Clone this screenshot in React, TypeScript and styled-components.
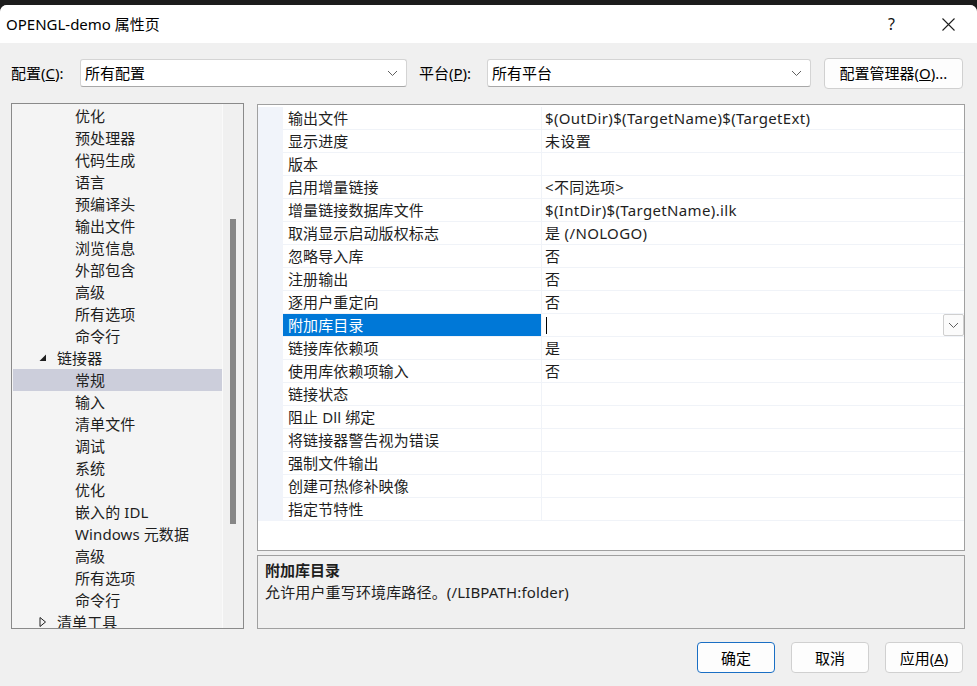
import React from "react";
import styled, { createGlobalStyle } from "styled-components";

const GlobalStyle = createGlobalStyle`
  html, body { margin: 0; padding: 0; background: #1c1c1c; }
  body { font-family: "Noto Sans", "Noto Sans CJK SC", sans-serif; font-size: 15px; color: #000; }
  * { box-sizing: border-box; }
`;

const Window = styled.div`
  margin-top: 5px;
  width: 977px;
  height: 681px;
  background: #f0f0f0;
  border-radius: 7px 7px 0 0;
  overflow: hidden;
  display: flex;
  flex-direction: column;
`;

const TitleBar = styled.div`
  height: 38px;
  background: #ffffff;
  display: flex;
  align-items: center;
  padding-left: 6px;
  flex-shrink: 0;
`;

const Title = styled.div`
  flex: 1;
  font-size: 15px;
  line-height: 20px;
`;

const TitleButton = styled.div`
  width: 57px;
  height: 38px;
  display: flex;
  align-items: center;
  justify-content: center;
  font-size: 16px;
  color: #111;
`;

const ConfigRow = styled.div`
  height: 60px;
  display: flex;
  align-items: center;
  padding: 0 14px 0 11px;
  flex-shrink: 0;
`;

const Label = styled.div<{ $w: number; $ml?: number }>`
  width: ${(p) => p.$w}px;
  margin-left: ${(p) => p.$ml ?? 0}px;
  line-height: 20px;
  white-space: nowrap;
`;

const Combo = styled.div<{ $w: number }>`
  width: ${(p) => p.$w}px;
  height: 28px;
  background: #ffffff;
  border: 1px solid #d4d4d4;
  border-bottom-color: #a8a8a8;
  border-radius: 3px;
  display: flex;
  align-items: center;
  padding-left: 4px;
  padding-right: 8px;
`;

const ComboText = styled.div`
  flex: 1;
  line-height: 20px;
`;

const Button = styled.div<{ $w: number; $primary?: boolean }>`
  width: ${(p) => p.$w}px;
  height: 31px;
  background: #fdfdfd;
  border: 1px solid ${(p) => (p.$primary ? "#1a6fc4" : "#d0d0d0")};
  border-radius: 4px;
  display: flex;
  align-items: center;
  justify-content: center;
  line-height: 20px;
`;

const ManagerButton = styled(Button)`
  margin-left: auto;
`;

const Main = styled.div`
  flex: 1;
  display: flex;
  padding: 0 12px 0 11px;
  min-height: 0;
`;

const Tree = styled.div`
  width: 233px;
  height: 526px;
  border: 1px solid #8a8a8a;
  background: #f4f4f4;
  display: flex;
  flex-shrink: 0;
`;

const TreeList = styled.div`
  flex: 1;
  overflow: hidden;
  padding: 1px 0 0 1px;
`;

const TreeRow = styled.div<{ $level: number; $selected?: boolean }>`
  height: 22px;
  display: flex;
  align-items: center;
  padding-left: ${(p) => (p.$level === 1 ? 26 : 62)}px;
  background: ${(p) => (p.$selected ? "#cccedb" : "transparent")};
  white-space: nowrap;
  line-height: 20px;
  color: #1e1e1e;
  letter-spacing: 0.1px;
`;

const Expander = styled.span`
  width: 18px;
  display: inline-flex;
  align-items: center;
`;

const ScrollTrack = styled.div`
  width: 21px;
  border-left: 1px solid #fafafa;
  background: #f0f0f0;
  position: relative;
  flex-shrink: 0;
`;

const ScrollThumb = styled.div`
  position: absolute;
  left: 7px;
  width: 6px;
  top: 115px;
  height: 305px;
  background: #868686;
`;

const RightCol = styled.div`
  margin-left: 13px;
  flex: 1;
  display: flex;
  flex-direction: column;
`;

const Grid = styled.div`
  height: 448px;
  margin-top: 1px;
  border: 1px solid #a0a0a0;
  background: #ffffff;
  padding-top: 2px;
`;

const GridRow = styled.div`
  display: grid;
  grid-template-columns: 25px 258px 1px 1fr;
  height: 23px;
`;

const Margin = styled.div`
  background: #f1f4fa;
`;

const NameCell = styled.div<{ $selected?: boolean }>`
  height: 22px;
  padding-left: 5px;
  display: flex;
  align-items: center;
  white-space: nowrap;
  line-height: 20px;
  background: ${(p) => (p.$selected ? "#0078d7" : "#ffffff")};
  color: ${(p) => (p.$selected ? "#ffffff" : "#1e1e1e")};
  border-bottom: 1px solid #f0f3f8;
  box-sizing: content-box;
  letter-spacing: 0.1px;
`;

const Divider = styled.div`
  background: #f0f3f8;
`;

const ValueCell = styled.div`
  height: 22px;
  padding-left: 3px;
  display: flex;
  align-items: center;
  white-space: nowrap;
  line-height: 20px;
  color: #1e1e1e;
  border-bottom: 1px solid #f0f3f8;
  box-sizing: content-box;
  position: relative;
  letter-spacing: 0.35px;
`;

const Caret = styled.div`
  width: 1px;
  height: 17px;
  background: #000;
  margin-left: 1px;
`;

const DropButton = styled.div`
  position: absolute;
  right: 0;
  top: 0;
  width: 21px;
  height: 22px;
  border: 1px solid #cfcfcf;
  border-radius: 2px;
  background: #fbfbfb;
  display: flex;
  align-items: center;
  justify-content: center;
`;

const Desc = styled.div`
  margin-top: 4px;
  height: 74px;
  border: 1px solid #a0a0a0;
  padding: 3px 7px;
`;

const DescTitle = styled.div`
  font-weight: bold;
  line-height: 22px;
  color: #1e1e1e;
`;

const DescText = styled.div`
  line-height: 22px;
  color: #1e1e1e;
  letter-spacing: 0.15px;
`;

const Footer = styled.div`
  height: 57px;
  display: flex;
  justify-content: flex-end;
  align-items: flex-start;
  gap: 16px;
  padding: 13px 14px 0 0;
  flex-shrink: 0;
`;

const Chevron = () => (
  <svg width="11" height="7" viewBox="0 0 11 7">
    <path d="M1 1 L5.5 5.5 L10 1" fill="none" stroke="#606060" strokeWidth="1" />
  </svg>
);

const ExpandedTri = () => (
  <svg width="8" height="8" viewBox="0 0 8 8">
    <path d="M7 0.5 L7 7 L0.5 7 Z" fill="#1e1e1e" />
  </svg>
);

const CollapsedTri = () => (
  <svg width="8" height="10" viewBox="0 0 8 10">
    <path d="M1 0.5 L6.5 5 L1 9.5 Z" fill="none" stroke="#1e1e1e" strokeWidth="1" />
  </svg>
);

type TreeItem = { label: string; level: number; expanded?: boolean; selected?: boolean };

const treeItems: TreeItem[] = [
  { label: "优化", level: 2 },
  { label: "预处理器", level: 2 },
  { label: "代码生成", level: 2 },
  { label: "语言", level: 2 },
  { label: "预编译头", level: 2 },
  { label: "输出文件", level: 2 },
  { label: "浏览信息", level: 2 },
  { label: "外部包含", level: 2 },
  { label: "高级", level: 2 },
  { label: "所有选项", level: 2 },
  { label: "命令行", level: 2 },
  { label: "链接器", level: 1, expanded: true },
  { label: "常规", level: 2, selected: true },
  { label: "输入", level: 2 },
  { label: "清单文件", level: 2 },
  { label: "调试", level: 2 },
  { label: "系统", level: 2 },
  { label: "优化", level: 2 },
  { label: "嵌入的 IDL", level: 2 },
  { label: "Windows 元数据", level: 2 },
  { label: "高级", level: 2 },
  { label: "所有选项", level: 2 },
  { label: "命令行", level: 2 },
  { label: "清单工具", level: 1, expanded: false },
];

const props: [string, string][] = [
  ["输出文件", "$(OutDir)$(TargetName)$(TargetExt)"],
  ["显示进度", "未设置"],
  ["版本", ""],
  ["启用增量链接", "<不同选项>"],
  ["增量链接数据库文件", "$(IntDir)$(TargetName).ilk"],
  ["取消显示启动版权标志", "是 (/NOLOGO)"],
  ["忽略导入库", "否"],
  ["注册输出", "否"],
  ["逐用户重定向", "否"],
  ["附加库目录", "__EDIT__"],
  ["链接库依赖项", "是"],
  ["使用库依赖项输入", "否"],
  ["链接状态", ""],
  ["阻止 Dll 绑定", ""],
  ["将链接器警告视为错误", ""],
  ["强制文件输出", ""],
  ["创建可热修补映像", ""],
  ["指定节特性", ""],
];

export default function App() {
  return (
    <>
      <GlobalStyle />
      <Window>
        <TitleBar>
          <Title>OPENGL-demo 属性页</Title>
          <TitleButton>?</TitleButton>
          <TitleButton>
            <svg width="13" height="13" viewBox="0 0 13 13">
              <path d="M0.5 0.5 L12.5 12.5 M12.5 0.5 L0.5 12.5" stroke="#1e1e1e" strokeWidth="1.1" />
            </svg>
          </TitleButton>
        </TitleBar>
        <ConfigRow>
          <Label $w={69}>
            配置(<u>C</u>):
          </Label>
          <Combo $w={327}>
            <ComboText>所有配置</ComboText>
            <Chevron />
          </Combo>
          <Label $w={68} $ml={12}>
            平台(<u>P</u>):
          </Label>
          <Combo $w={324}>
            <ComboText>所有平台</ComboText>
            <Chevron />
          </Combo>
          <ManagerButton $w={139}>
            配置管理器(<u>O</u>)...
          </ManagerButton>
        </ConfigRow>
        <Main>
          <Tree>
            <TreeList>
              {treeItems.map((t, i) => (
                <TreeRow key={i} $level={t.level} $selected={t.selected}>
                  {t.level === 1 && (
                    <Expander>{t.expanded ? <ExpandedTri /> : <CollapsedTri />}</Expander>
                  )}
                  {t.label}
                </TreeRow>
              ))}
            </TreeList>
            <ScrollTrack>
              <ScrollThumb />
            </ScrollTrack>
          </Tree>
          <RightCol>
            <Grid>
              {props.map(([name, value], i) => {
                const sel = value === "__EDIT__";
                return (
                  <GridRow key={i}>
                    <Margin />
                    <NameCell $selected={sel}>{name}</NameCell>
                    <Divider />
                    <ValueCell>
                      {sel ? (
                        <>
                          <Caret />
                          <DropButton>
                            <Chevron />
                          </DropButton>
                        </>
                      ) : (
                        value
                      )}
                    </ValueCell>
                  </GridRow>
                );
              })}
            </Grid>
            <Desc>
              <DescTitle>附加库目录</DescTitle>
              <DescText>允许用户重写环境库路径。(/LIBPATH:folder)</DescText>
            </Desc>
          </RightCol>
        </Main>
        <Footer>
          <Button $w={78} $primary>
            确定
          </Button>
          <Button $w={78}>取消</Button>
          <Button $w={78}>
            应用(<u>A</u>)
          </Button>
        </Footer>
      </Window>
    </>
  );
}
